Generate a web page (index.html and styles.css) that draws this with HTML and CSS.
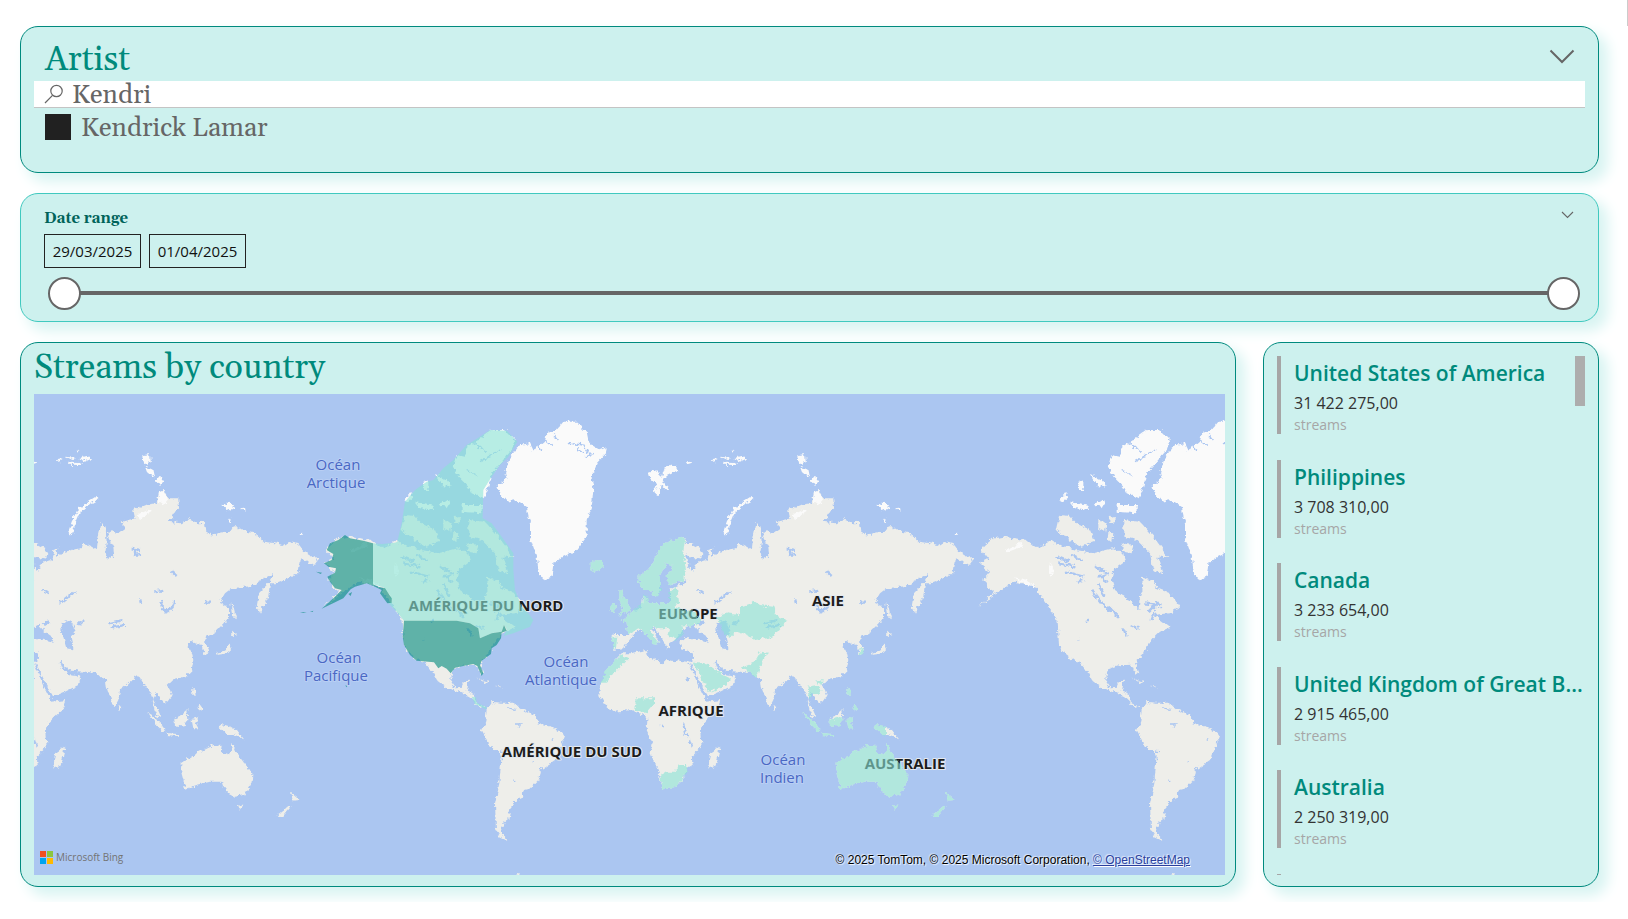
FILE: index.html
```html
<!DOCTYPE html>
<html lang="en">
<head>
<meta charset="utf-8">
<title>Streams by country</title>
<link rel="stylesheet" href="styles.css">
</head>
<body>
<div class="topstrip"></div>
<main class="page">
  <section class="panel artist">
    <header class="panel-head">
      <h2 class="title">Artist</h2>
      <button class="chevron" type="button" aria-label="Collapse artist list">
        <svg width="26" height="15" viewBox="0 0 26 15"><path d="M1.500 1.500L13 13L24.500 1.500" fill="none" stroke="#666" stroke-width="2"/></svg>
      </button>
    </header>
    <label class="search">
      <svg width="20" height="20" viewBox="0 0 20 20" aria-hidden="true"><circle cx="12.500" cy="7" r="5.700" fill="none" stroke="#666" stroke-width="1.200"/><path d="M8.500 11.300L1 19" stroke="#666" stroke-width="1.200"/></svg>
      <input type="text" value="Kendri" aria-label="Search artist">
    </label>
    <label class="option"><input type="checkbox" checked><span>Kendrick Lamar</span></label>
  </section>

  <section class="panel dates">
    <header class="panel-head">
      <h2 class="subtitle">Date range</h2>
      <button class="chevron" type="button" aria-label="Date options">
        <svg width="13" height="8" viewBox="0 0 13 8"><path d="M1 1L6.500 6.500L12 1" fill="none" stroke="#666" stroke-width="1.100"/></svg>
      </button>
    </header>
    <div class="date-fields">
      <input type="text" value="29/03/2025" aria-label="Start date">
      <input type="text" value="01/04/2025" aria-label="End date">
    </div>
    <div class="slider">
      <input type="range" min="0" max="3" value="0" aria-label="Range start">
      <input type="range" min="0" max="3" value="3" aria-label="Range end">
    </div>
  </section>

  <div class="row">
    <section class="panel map-panel">
      <h2 class="title">Streams by country</h2>
      <div class="map">
        <svg class="world" viewBox="34 394 1191 481" preserveAspectRatio="xMidYMid slice" role="img" aria-label="World map of streams">
          <defs>
            <filter id="coast" x="-5%" y="-5%" width="110%" height="110%">
              <feTurbulence type="fractalNoise" baseFrequency="0.08" numOctaves="3" seed="4" result="n"/>
              <feDisplacementMap in="SourceGraphic" in2="n" scale="18" xChannelSelector="R" yChannelSelector="G"/>
            </filter>
            <g id="east" class="land">
              <path d="M238 580L235 560L262 540L275 525L290 490L310 460L340 450L360 443L378 450L375 462L395 462L420 475L430 495L415 508L385 500L378 492L382 515L400 542L410 520L440 510L445 480L460 475L455 498L480 485L500 480L530 475L535 458L560 470L575 480L580 440L590 398L602 410L605 460L600 490L612 503L628 500L625 470L608 440L620 420L640 430L660 415L650 395L690 385L685 360L720 345L755 340L762 305L775 300L790 325L820 325L822 350L800 385L790 395L830 400L850 388L880 400L900 398L905 430L930 435L975 425L985 405L1010 420L1040 425L1060 440L1075 455L1110 460L1135 465L1150 455L1180 462L1195 480L1215 495L1240 508L1228 525L1205 515L1188 505L1185 520L1180 550L1150 565L1110 580L1095 580L1090 620L1065 668L1055 650L1062 610L1085 585L1105 560L1100 553L1060 575L1040 588L980 595L960 610L945 635L972 655L972 680L950 710L915 735L903 742L900 755L912 780L905 795L895 785L890 765L870 760L865 750L848 760L850 770L862 790L865 815L860 840L840 860L810 870L790 880L785 885L795 900L802 920L790 935L775 938L765 925L752 905L745 930L755 950L768 980L760 985L748 960L742 920L735 905L715 880L700 855L685 865L660 890L645 900L640 930L628 952L618 930L605 890L603 870L590 865L575 850L540 845L500 842L480 832L470 812L464 818L472 838L490 852L515 855L528 865L520 885L480 905L445 920L438 908L420 875L400 835L393 820L388 822L398 845L415 885L430 915L440 935L485 930L475 955L430 1000L420 1020L425 1070L395 1100L398 1125L380 1135L375 1160L350 1190L310 1195L300 1170L295 1140L280 1110L272 1090L278 1060L260 1020L262 990L255 975L235 970L215 960L160 965L135 945L118 915L120 885L140 840L165 810L185 790L210 790L260 780L265 800L310 820L320 810L380 818L396 814L402 788L365 778L358 755L370 745L400 745L420 752L440 758L448 745L420 725L400 705L380 710L365 725L345 750L330 760L330 775L320 770L305 745L285 715L275 715L300 760L285 765L260 735L250 725L235 720L215 740L205 755L190 775L160 780L158 735L205 735L200 700L185 690L220 665L245 650L250 620L260 620L265 640L300 640L330 640L330 600L350 590L375 580L385 570L325 585L320 560L340 525L320 520L300 560L300 600L285 625L270 600L245 600Z"/>
              <path class="sea" d="M470 700L495 690L512 720L500 735L505 778L485 775L475 740L466 718ZM410 700L425 690L435 698L420 708Z"/>
              <path class="lake" d="M768 630L778 665L800 655L808 630M800 545L812 555M680 475L705 480M690 495L705 492M745 605L775 600M705 628L708 642M465 640L510 605M400 540L385 525M610 700L655 690M620 712L660 705M900 638L915 638M520 705L535 690M370 1000L375 1030L385 1040M390 1050L396 1070M380 865L392 870M305 1005L308 1012M690 480L690 500M430 610L410 600"/>
              <path d="M158 640L168 640L165 665L150 665ZM178 598L192 600L188 620L205 640L212 665L175 674L190 655L178 630ZM88 525L100 512L125 510L132 528L105 547ZM450 1090L478 1070L473 1110L460 1137L445 1130ZM640 945L650 952L645 962ZM730 968L750 980L783 1022L775 1026L750 1000ZM805 990L825 980L847 960L850 990L835 1010L807 1005ZM785 1029L820 1032L818 1038L786 1035ZM860 990L880 985L872 1000L880 1015L865 1015ZM940 1010L950 1003L975 1010L1000 1025L1017 1048L985 1035L965 1035ZM862 895L870 895L872 920L862 915ZM882 945L892 948L890 962L880 955ZM930 790L965 780L975 760L980 770L970 790L940 794ZM980 722L997 732L985 738L978 730ZM976 640L985 650L993 685L983 680ZM830 1120L875 1090L905 1075L925 1065L950 1068L947 1085L975 1095L983 1058L995 1090L1015 1115L1042 1150L1040 1180L1020 1215L990 1220L970 1210L955 1190L950 1175L915 1175L875 1185L840 1197L835 1170L827 1140ZM998 1243L1015 1245L1005 1260ZM1158 1205L1180 1225L1165 1242ZM1150 1248L1160 1248L1130 1283L1117 1275Z"/>
              <g class="ice">
                <path d="M500 436L490 425L500 395L518 358L548 335L575 318L580 328L550 345L525 370L508 410ZM712 198L735 196L738 220L718 222ZM720 230L745 238L750 262L728 252ZM750 270L765 258L778 275L765 288ZM762 305L775 300L790 330L775 348L758 335ZM265 245L285 240L305 260L315 232L345 226L352 240L320 255L310 275L330 300L322 303L305 285L295 318L282 305L290 285L270 265ZM952 345L975 335L990 350L970 362ZM1008 355L1020 353L1022 362ZM1180 430L1195 428L1192 436ZM965 385L980 390L975 400Z"/>
                <path d="M455 208L470 205L465 215ZM480 200L510 203L500 210ZM520 205L545 198L562 205L540 215ZM490 218L530 219L528 225L490 224ZM515 178L525 180L520 188ZM380 215L400 217L385 222ZM698 375L740 355L744 362L705 387Z"/>
              </g>
            </g>
            <g id="west" class="land">
              <path d="M85 470L115 445L145 440L215 450L245 475L285 455L315 465L365 480L415 490L475 475L505 490L510 515L475 540L470 570L480 600L535 640L550 660L555 620L565 590L560 560L595 570L605 595L645 610L675 650L645 670L595 675L645 712L615 725L595 745L575 770L567 790L545 812L540 822L550 850L542 855L530 824L490 826L465 834L453 850L450 870L465 892L485 890L492 874L507 872L500 905L525 915L525 935L560 955L540 952L510 922L480 905L440 893L412 872L400 850L375 818L360 815L330 792L312 765L308 695L290 665L265 630L240 590L210 582L180 575L150 590L120 615L70 650L118 605L95 590L85 570L105 545L75 520L100 508L80 482Z"/>
              <path class="ice" d="M575 120L615 120L645 150L635 180L605 215L575 250L565 290L550 325L515 310L505 290L475 260L460 225L470 195L495 200L500 170L535 150ZM330 310L345 318L325 335L315 330ZM345 335L400 348L405 360L360 355ZM485 345L545 345L545 370L485 365ZM370 275L385 270L385 300L372 300ZM408 255L440 270L455 290L425 285ZM430 330L450 335L445 352L420 345Z"/>
              <path d="M315 375L345 378L370 405L405 420L420 455L375 470L335 440L305 420ZM505 390L555 395L595 440L640 500L610 500L625 550L595 540L585 490L545 450L505 440ZM430 390L455 400L450 425L430 415ZM465 380L480 385L475 400L462 398ZM460 425L475 430L472 455L458 450ZM500 460L535 465L530 490L505 485Z"/>
              <path class="lake" d="M305 500L340 515M310 520L365 530M330 545L385 560M350 495L380 510M365 575L385 570M410 600L440 640L470 670M430 580L445 615M440 560L455 580M505 715L515 740M525 705L550 715M460 650L490 680M565 640L620 645M580 665L610 635M590 690L600 660M420 530L450 545M430 560L460 550M395 690L405 690M368 748L372 750"/>
              <path class="ice" d="M590 285L620 265L615 250L630 200L660 165L690 160L700 180L735 150L740 130L770 120L790 95L830 95L860 125L865 150L875 165L900 180L920 172L918 190L890 220L875 260L880 300L876 345L860 390L860 440L830 480L790 500L760 520L755 560L735 568L718 555L710 500L690 440L690 400L680 350L650 330L620 335L600 310Z"/>
              <path class="ice" d="M155 480L190 460L205 460L200 470L160 485ZM175 565L215 572L240 588L215 585ZM283 520L295 540L290 560L282 550Z"/>
              <path class="lake thin" d="M700 180L715 160L722 180M735 150L755 165M760 130L775 150M805 160L850 165L865 190M860 200L880 190M830 175L855 190M520 160L560 185M540 215L600 180M500 240L530 255"/>
              <path d="M575 935L600 938L640 938L670 960L705 975L715 1000L760 1012L795 1035L775 1085L765 1110L720 1140L715 1170L690 1195L672 1200L665 1225L640 1235L630 1260L625 1290L610 1300L605 1325L622 1352L600 1342L588 1320L585 1240L598 1180L605 1095L570 1065L545 1020L555 1000L560 960ZM535 865L565 875L560 880ZM585 887L608 890L600 893ZM650 1452L670 1455L650 1460Z"/>
              <path class="lake thin" d="M645 1002L665 1002M657 1003L657 1012M640 1170L646 1172M755 1047L760 1047M698 1115L703 1117M625 955L650 958M600 1083L615 1085"/>
            </g>
          </defs>
          <rect class="ocean" x="34" y="394" width="1191" height="481"/>
          <g transform="translate(-95 390) scale(.33333)"><use href="#east" filter="url(#coast)"/></g>
          <g transform="translate(560 390) scale(.33333)"><use href="#east" filter="url(#coast)"/></g>
          <g transform="translate(300 390) scale(.33333)"><use href="#west" filter="url(#coast)"/></g>
          <g transform="translate(955 390) scale(.33333)"><use href="#west" filter="url(#coast)"/></g>
          <g class="sea-label">
            <text x="338" y="470">Océan</text><text x="336" y="488">Arctique</text>
            <text x="339" y="663">Océan</text><text x="336" y="681">Pacifique</text>
            <text x="566" y="667">Océan</text><text x="561" y="685">Atlantique</text>
            <text x="783" y="765">Océan</text><text x="782" y="783">Indien</text>
          </g>
          <g class="land-label">
            <text x="486" y="611">AMÉRIQUE DU NORD</text>
            <text x="572" y="757">AMÉRIQUE DU SUD</text>
            <text x="688" y="619">EUROPE</text>
            <text x="828" y="606">ASIE</text>
            <text x="691" y="716">AFRIQUE</text>
            <text x="905" y="769">AUSTRALIE</text>
          </g>
          <g transform="translate(300 390) scale(.33333)">
            <path class="low" d="M219 460L245 462L285 458L292 455L305 400L315 335L345 300L380 275L400 270L430 235L460 210L500 165L540 140L570 120L620 122L652 155L625 200L600 225L575 260L550 300L548 385L575 400L605 440L640 490L640 540L645 600L665 650L685 670L700 690L690 710L640 730L612 738L620 718L612 705L605 725L575 730L540 745L535 715L510 700L470 692L312 692L290 665L265 640L275 635L270 615L250 592L219 583ZM515 920L528 922L530 938L560 952L558 958L525 942Z"/>
            <path class="high" d="M312 692L470 692L510 700L535 715L540 745L575 730L605 725L612 705L620 722L605 728L603 745L590 765L575 775L573 792L545 812L540 825L550 850L545 858L532 828L520 822L490 828L465 833L452 850L440 836L425 828L415 835L402 817L350 812L330 795L312 765L308 740ZM219 460L190 452L150 445L135 435L115 450L90 460L80 480L100 492L95 510L72 520L85 530L108 535L105 548L82 560L90 575L105 595L125 600L100 625L65 656L130 625L152 598L165 590L200 580L225 590L245 600L240 610L262 640L275 638L275 625L255 595L235 590L219 583ZM48 545L66 548L62 552ZM30 665L40 662L38 666ZM0 667L20 666L10 669ZM136 886L142 888L139 892ZM145 612L156 606L152 618Z"/>
          </g>
          <g transform="translate(560 390) scale(.33333)">
            <path class="low" filter="url(#coast)" d="M200 700L185 690L220 665L245 640L300 640L330 640L325 610L350 590L358 640L340 650L400 665L425 690L410 705L365 710L370 730L350 750L325 740L330 715L300 715L280 712L272 725L300 760L285 765L255 730L235 715L205 735ZM238 580L235 560L262 540L275 525L290 490L310 460L340 450L360 443L375 450L370 485L378 540L372 572L325 585L320 560L340 525L320 520L300 560L303 600L285 625L270 600L245 600ZM250 615L262 620L265 640L250 640ZM88 525L100 512L125 510L132 528L105 547ZM158 640L168 640L165 665L150 665ZM178 598L192 600L188 620L205 640L212 665L175 674L190 655L178 630ZM160 740L172 740L168 775L158 775ZM470 680L500 670L540 675L540 650L585 635L600 645L640 650L645 675L680 690L660 715L640 740L590 750L560 735L530 725L510 745L490 730L480 700ZM165 810L185 795L205 805L160 850L140 878L120 878L140 840ZM230 925L285 925L285 940L260 970L222 960ZM400 815L440 820L480 850L510 865L505 885L470 895L448 905L425 870ZM545 835L580 820L600 785L628 788L610 805L600 830L590 865L570 850ZM300 1165L315 1145L345 1145L360 1125L382 1125L380 1150L350 1190L310 1195ZM742 890L770 885L785 900L775 915L755 910L748 930ZM765 875L788 870L785 885ZM898 775L910 775L910 790L900 793ZM730 968L750 980L783 1022L775 1026L750 1000ZM805 990L848 980L850 990L835 1010L807 1005ZM785 1029L820 1032L818 1038L786 1035ZM860 990L880 985L872 1000L880 1015L865 1015ZM940 1010L950 1003L978 1010L978 1038L965 1035ZM862 895L870 895L872 920L862 915ZM882 945L892 948L890 962L880 955ZM830 1120L875 1090L905 1075L925 1065L950 1068L947 1085L975 1095L983 1058L995 1090L1015 1115L1042 1150L1040 1180L1020 1215L990 1220L970 1210L955 1190L950 1175L915 1175L875 1185L840 1197L835 1170L827 1140ZM998 1243L1015 1245L1005 1260ZM1158 1205L1180 1225L1165 1242ZM1150 1248L1160 1248L1130 1283L1117 1275Z"/>
          </g>
        </svg>
        <div class="bing">
          <svg width="13" height="13" viewBox="0 0 13 13" aria-hidden="true"><path fill="#f25022" d="M0 0h6v6H0z"/><path fill="#8cc63f" d="M7 0h6v6H7z"/><path fill="#00a4ef" d="M0 7h6v6H0z"/><path fill="#ffb900" d="M7 7h6v6H7z"/></svg>
          <span>Microsoft Bing</span>
        </div>
        <p class="credit">© 2025 TomTom, © 2025 Microsoft Corporation, <a href="#osm">© OpenStreetMap</a></p>
      </div>
    </section>

    <section class="panel cards" aria-label="Streams per country">
      <ul class="card-list">
        <li><h3>United States of America</h3><p class="value">31 422 275,00</p><p class="unit">streams</p></li>
        <li><h3>Philippines</h3><p class="value">3 708 310,00</p><p class="unit">streams</p></li>
        <li><h3>Canada</h3><p class="value">3 233 654,00</p><p class="unit">streams</p></li>
        <li><h3>United Kingdom of Great B...</h3><p class="value">2 915 465,00</p><p class="unit">streams</p></li>
        <li><h3>Australia</h3><p class="value">2 250 319,00</p><p class="unit">streams</p></li>
        <li class="next" aria-hidden="true"></li>
      </ul>
      <div class="scroll-thumb"></div>
    </section>
  </div>
</main>
</body>
</html>
```

FILE: styles.css
```css
* { box-sizing: border-box; }
body { margin: 0; background: #fff; font-family: "Open Sans", "Noto Sans", sans-serif; }
h2, h3, p, ul { margin: 0; padding: 0; font-weight: 400; }
input, button { font: inherit; border: 0; padding: 0; background: none; }

.topstrip { height: 26px; border-right: 1px solid #ccc; }
.page { display: flex; flex-direction: column; gap: 20px; padding: 0 29px 15px 20px; }
.panel {
  background: #cdf1ee;
  border: 1px solid #008a7e;
  border-radius: 18px;
  box-shadow: 8px 8px 14px 1px #d8f4f2;
}
.panel-head { display: flex; justify-content: space-between; }
.title { font-family: Georgia, Gelasio, "Liberation Serif", serif; font-size: 34px; line-height: 51px; color: #008a7c; }

.artist { padding: 5px 13px 32px; }
.artist .panel-head { padding: 0 10px 0 11px; height: 49px; align-items: center; }
.artist .title { padding-top: 7px; }
.chevron { display: flex; cursor: pointer; }
.search {
  display: flex; align-items: center; gap: 8px;
  height: 27px; padding-left: 10px;
  background: #fff; border-bottom: 1px solid #c4c4c4;
}
.search input, .option { font-family: Georgia, Gelasio, "Liberation Serif", serif; font-size: 26px; line-height: 26px; color: #666; }
.search input { flex: 1; min-width: 0; height: 26px; padding-top: 2px; outline: 0; }
.option { display: flex; align-items: center; gap: 10px; padding: 6px 10px 0 11px; height: 32px; }
.option span { padding-top: 4px; }
.option input { appearance: none; width: 26px; height: 26px; margin: 0; background: #212121; }

.dates { padding: 15px 13px 11px; border-color: #40c9bf; }
.dates .panel-head { padding: 0 11px 0 10px; height: 20px; align-items: flex-start; }
.dates .chevron { padding-top: 2px; }
.subtitle { font-family: Georgia, Gelasio, "Liberation Serif", serif; font-size: 15px; line-height: 20px; font-weight: 700; color: #00635a; }
.date-fields { display: flex; gap: 8px; padding: 5px 10px 0; }
.date-fields input {
  width: 97px; height: 34px;
  border: 1px solid #222; text-align: center; font-size: 15px; color: #111;
}
.slider {
  display: grid; margin: 8px 5px 0 14px;
  background: linear-gradient(#666, #666) center / calc(100% - 34px) 4px no-repeat;
}
.slider input {
  grid-area: 1 / 1; width: 100%; height: 34px; margin: 0;
  appearance: none; background: none; pointer-events: none;
}
.slider input::-webkit-slider-thumb {
  appearance: none; width: 33px; height: 33px; border-radius: 50%;
  background: #fff; border: 2px solid #666; pointer-events: auto;
}

.row { display: flex; gap: 27px; }
.map-panel { flex: 1; min-width: 0; padding: 0 10px 11px 13px; }
.map { position: relative; }
.world { display: block; width: 100%; aspect-ratio: 1191 / 481; }
.ocean, .sea { fill: #abc6f1; }
.land { fill: #eeeeea; }
.ice { fill: #fafafa; }
.lake { fill: none; stroke: #abc6f1; stroke-width: 7; stroke-linejoin: round; }
.lake.thin { stroke-width: 4; }
.low { fill: #8ae4d6; opacity: .6; }
.high { fill: #008a7b; opacity: .6; }
.sea-label, .land-label { font-size: 15px; text-anchor: middle; paint-order: stroke; stroke-width: 2px; stroke-linejoin: round; }
.sea-label { fill: #4a68c4; stroke: #b9cff4; }
.land-label { fill: #1c1c1c; font-weight: 700; stroke: #e4e9ef; }
.bing { position: absolute; left: 6px; bottom: 11px; display: flex; align-items: center; gap: 3px; font-size: 10px; line-height: 14px; color: #737373; }
.credit {
  position: absolute; right: 35px; bottom: 6px;
  font: 12px/18px "Liberation Sans", Arial, sans-serif; color: #000;
  text-shadow: 1px 1px 1px #fff, -1px -1px 1px #dfe9fa;
}
.credit a { color: #2a3f9e; }

.cards { position: relative; width: 336px; padding: 13px 13px 11px; }
.card-list { display: flex; flex-direction: column; justify-content: space-between; height: 100%; list-style: none; }
.card-list li { border-left: 4px solid #a6a6a6; padding-left: 13px; }
.card-list .next { height: 1px; }
.card-list h3 { font-size: 21px; line-height: 34px; font-weight: 600; color: #008a7c; white-space: nowrap; }
.value { font-size: 16px; line-height: 26px; color: #333; }
.unit { font-size: 14px; line-height: 18px; color: #a6a6a6; }
.scroll-thumb { position: absolute; top: 13px; right: 13px; width: 10px; height: 50px; background: #adadad; }
```
